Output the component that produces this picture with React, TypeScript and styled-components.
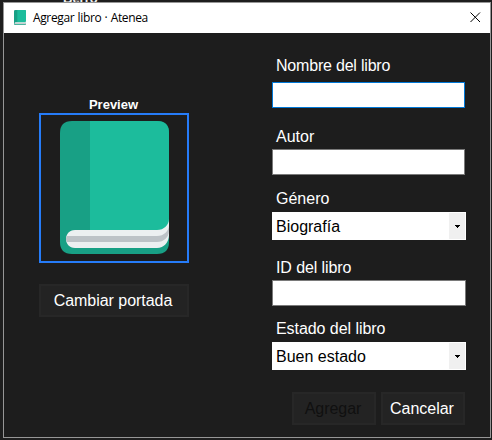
import React from "react";
import styled, { createGlobalStyle } from "styled-components";

const GlobalStyle = createGlobalStyle`
  * { box-sizing: border-box; }
  body { margin: 0; background: #1e1e1e; overflow: hidden; }
  button, input { font: inherit; margin: 0; border-radius: 0; outline: none; }
`;

const Desktop = styled.div`
  width: 492px;
  height: 440px;
  display: flex;
  flex-direction: column;
  background: #1e1e1e;
  font-family: "Liberation Sans", Arial, sans-serif;
  font-size: 16px;
`;

const HiddenCaption = styled.div`
  height: 2px;
  padding-left: 63px;
  display: flex;
  align-items: flex-end;
  overflow: hidden;
  color: #f0f0f0;
  font-size: 13px;
  font-weight: bold;
  line-height: 7px;
`;

const Window = styled.section`
  width: 488px;
  height: 436px;
  margin-left: 3px;
  border: 1px solid #969696;
  background: #1d1d1d;
`;

const TitleBar = styled.header`
  height: 30px;
  display: flex;
  align-items: center;
  padding: 0 9px 1px 10px;
  background: #fff;
  color: #000;
`;

const Title = styled.h1`
  flex: 1;
  margin: 1px 0 0 7px;
  font: 12px/16px "Open Sans", "Noto Sans", sans-serif;
  letter-spacing: -0.37px;
  word-spacing: 0.6px;
`;

const CloseButton = styled.button`
  width: 11px;
  height: 11px;
  padding: 0;
  border: 0;
  display: flex;
  background: none;
`;

const Content = styled.main`
  display: flex;
`;

const CoverColumn = styled.div`
  width: 150px;
  margin-left: 35px;
  padding-top: 65px;
  display: flex;
  flex-direction: column;
`;

const PreviewLabel = styled.div`
  height: 15px;
  padding-right: 1px;
  font-size: 13px;
  font-weight: bold;
  line-height: 14px;
  text-align: center;
  color: #fff;
`;

const Frame = styled.div`
  height: 150px;
  margin-bottom: 21px;
  padding-bottom: 1px;
  border: 2px solid #267cf8;
  display: flex;
  align-items: center;
  justify-content: center;
`;

const ActionButton = styled.button<{ $width: number }>`
  width: ${(p) => p.$width}px;
  height: 33px;
  padding: 0 2px 0 0;
  border: 2px solid #272727;
  background: #232323;
  color: #fff;
  letter-spacing: -0.03px;
  line-height: 29px;
  &:disabled { color: #101010; }
`;

const Form = styled.form`
  width: 194px;
  margin-left: 83px;
  padding-top: 24px;
`;

const Label = styled.label<{ $gap: number; $tracking?: number }>`
  display: block;
  height: 18px;
  margin: 0 0 ${(p) => p.$gap}px 4px;
  line-height: 18px;
  letter-spacing: ${(p) => p.$tracking ?? 0}px;
  color: #fff;
`;

const TextInput = styled.input<{ $active?: boolean; $width: number; $after: number }>`
  display: block;
  width: ${(p) => p.$width}px;
  height: 26px;
  margin-bottom: ${(p) => p.$after}px;
  padding: 0 3px;
  border: 1px solid ${(p) => (p.$active ? "#0078d7" : "#7a7a7a")};
  background: #fff;
`;

const Combo = styled.div<{ $after: number }>`
  height: 28px;
  margin-bottom: ${(p) => p.$after}px;
  padding: 1px 1px 1px 4px;
  display: flex;
  background: #fff;
  color: #000;
  line-height: 27px;
`;

const ComboValue = styled.span`
  flex: 1;
`;

const ComboArrow = styled.span`
  width: 16px;
  display: flex;
  align-items: center;
  justify-content: center;
  background: #f0f0f0;
`;

const Actions = styled.div`
  display: flex;
  gap: 5px;
  padding-left: 20px;
`;

function Book({ width, height }: { width: number; height: number }) {
  return (
    <svg width={width} height={height} viewBox="0 0 109 133" preserveAspectRatio="none">
      <path d="M12 0H97Q109 0 109 12V121Q109 133 97 133H12Q0 133 0 121V12Q0 0 12 0Z" fill="#18a085" />
      <path d="M30 0H97Q109 0 109 12V109H30Z" fill="#1cbc9c" />
      <path d="M15 109H97C104 109 109 104 109 98V114C109 121 104 127 97 127H15C3 127 3 109 15 109Z" fill="#ecf0f1" />
      <path d="M6 118Q6 116 7 115H97C104 115 109 110 109 104V110C109 116 104 121 97 121H7Q6 120 6 118Z" fill="#bdc3c7" />
    </svg>
  );
}

function Dropdown({ value, after }: { value: string; after: number }) {
  return (
    <Combo $after={after}>
      <ComboValue>{value}</ComboValue>
      <ComboArrow>
        <svg width="6" height="4" shapeRendering="crispEdges">
          <path d="M1 1h5v1h-5zM2 2h3v1h-3zM3 3h1v1h-1z" fill="#000" />
        </svg>
      </ComboArrow>
    </Combo>
  );
}

export default function App() {
  return (
    <>
      <GlobalStyle />
      <Desktop>
        <HiddenCaption>Berro</HiddenCaption>
        <Window>
          <TitleBar>
            <Book width={12} height={15} />
            <Title>Agregar libro · Atenea</Title>
            <CloseButton aria-label="Cerrar">
              <svg width="11" height="11">
                <path d="M.5.5l9.5 9.5M10 .5l-9.5 9.5" stroke="#000" strokeWidth="1" />
              </svg>
            </CloseButton>
          </TitleBar>
          <Content>
            <CoverColumn>
              <PreviewLabel>Preview</PreviewLabel>
              <Frame>
                <Book width={109} height={133} />
              </Frame>
              <ActionButton $width={150}>Cambiar portada</ActionButton>
            </CoverColumn>
            <Form>
              <Label $gap={7} $tracking={-0.2}>Nombre del libro</Label>
              <TextInput $active $width={193} $after={20} />
              <Label $gap={3}>Autor</Label>
              <TextInput $width={193} $after={15} />
              <Label $gap={4}>Género</Label>
              <Dropdown value="Biografía" after={19} />
              <Label $gap={3} $tracking={-0.1}>ID del libro</Label>
              <TextInput $width={194} $after={14} />
              <Label $gap={4} $tracking={-0.06}>Estado del libro</Label>
              <Dropdown value="Buen estado" after={22} />
              <Actions>
                <ActionButton type="button" $width={84} disabled>Agregar</ActionButton>
                <ActionButton type="button" $width={84}>Cancelar</ActionButton>
              </Actions>
            </Form>
          </Content>
        </Window>
      </Desktop>
    </>
  );
}
